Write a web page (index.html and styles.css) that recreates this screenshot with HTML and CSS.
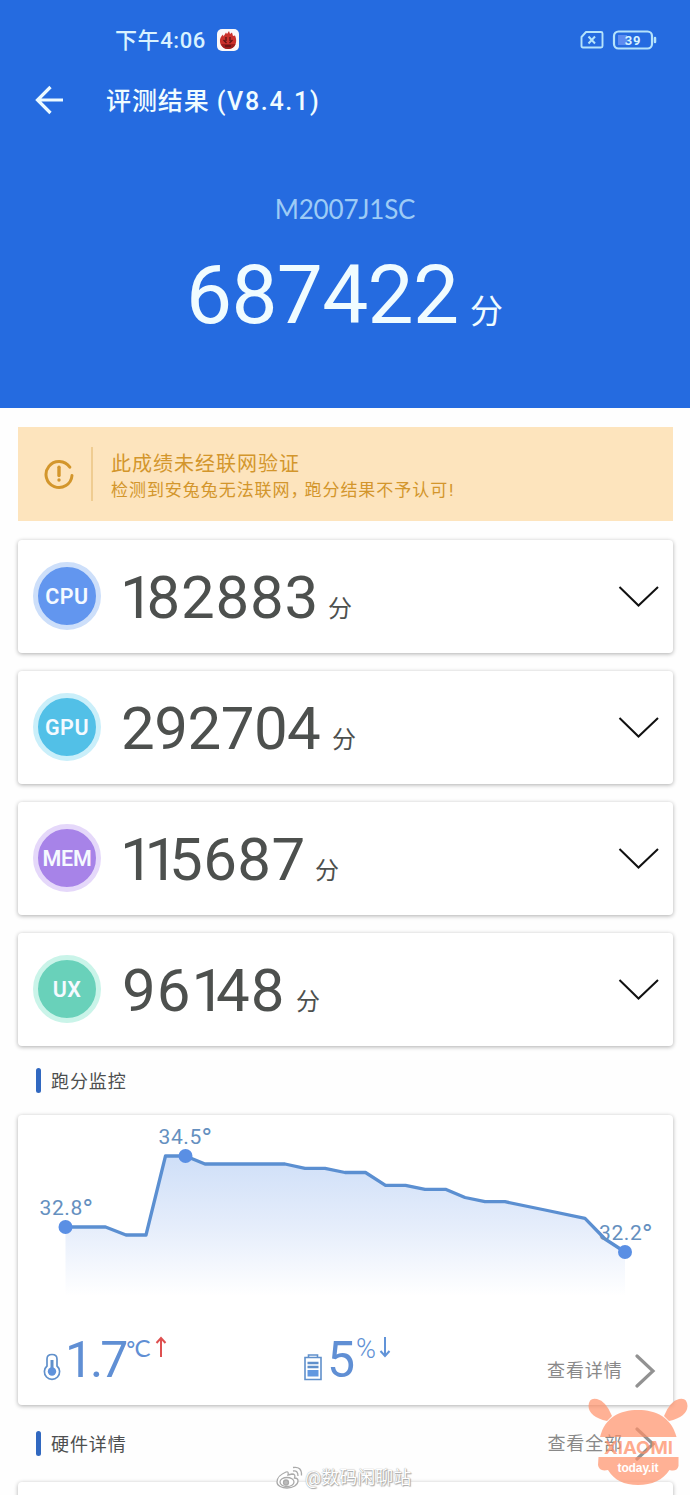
FILE: index.html
```html
<!DOCTYPE html>
<html lang="zh-CN">
<head>
<meta charset="utf-8">
<title>评测结果</title>
<link rel="stylesheet" href="styles.css">
</head>
<body>
<div class="screen">
  <header class="hero">
    <div class="status">
      <span class="clock">下午4:06</span>
      <svg class="app-icon" width="22" height="22" viewBox="0 0 22 22"><rect width="22" height="22" rx="5" fill="#fbf8f8"/><path d="M3 13C2.500 10 4 7 6 5.500L6.500 7.500L9 3.500L10 5L12 2L13 5L15 3.500L16 7L18 6.500C20 11 19.500 16 16 18.500C13 20.500 8 20.500 5.500 18C4 16.500 3.300 15 3 13Z" fill="#c9302b"/><path d="M4 15L18.500 15C17 19 14 20 11 20C7.500 20 5 18 4 15Z" fill="#9c1d1d"/><path d="M6.500 11L9.500 14M15.500 11L12.500 14M9 8V12M13 8V12M8 17H14" stroke="#5e1415" stroke-width="1.300"/></svg>
      <svg class="system" width="78" height="22" viewBox="0 0 78 22" fill="none" stroke="#b5e3fb">
        <path d="M6 3H21Q22.500 3 22.500 4.500V17Q22.500 18.500 21 18.500H3Q1.500 18.500 1.500 17V8Z" stroke-width="1.900" stroke-linejoin="round"/>
        <path d="M8.500 7.500L15 14.500M15 7.500L8.500 14.500" stroke-width="2"/>
        <rect x="34" y="2.500" width="38" height="17" rx="4.500" stroke-width="2.200"/>
        <rect x="38" y="6" width="9" height="10" fill="#5e8cf0" stroke="none"/>
        <path d="M75 9V13" stroke-width="2.500" stroke-linecap="round"/>
        <text class="charge" x="53" y="15.500" stroke="none">39</text>
      </svg>
    </div>
    <div class="titlebar">
      <svg width="30" height="30" viewBox="0 0 30 30" fill="none" stroke="#ecfaff" stroke-width="3.200"><path d="M16.500 2L3.500 15L16.500 28M3.500 15H29"/></svg>
      <h1>评测结果 <span>(V8.4.1)</span></h1>
    </div>
    <div class="model">M2007J1SC</div>
    <div class="total"><span class="total-num">687422</span><span class="total-unit">分</span></div>
  </header>

  <main class="content">
    <section class="notice">
      <svg width="32" height="32" viewBox="0 0 32 32" fill="none" stroke="#d3962c" stroke-width="3" stroke-linecap="round"><path d="M26.800 9.200A13 13 0 1 0 29 17.500"/><path d="M16 9.200V17.500" stroke-width="3.400"/><circle cx="16" cy="22" r="1.700" fill="#d3962c" stroke="none"/></svg>
      <div class="notice-text"><strong>此成绩未经联网验证</strong><span>检测到安兔兔无法联网<i>，</i>跑分结果不予认可<b>!</b></span></div>
    </section>

    <section class="card score"><span class="badge cpu">CPU</span><span class="num cpu-num"><span class="one first">1</span>82883</span><span class="unit">分</span><svg class="chevron" width="42" height="24" viewBox="0 0 42 24"><path d="M1.500 2L20.500 20.500L40 2"/></svg></section>
    <section class="card score"><span class="badge gpu">GPU</span><span class="num gpu-num">292704</span><span class="unit">分</span><svg class="chevron" width="42" height="24" viewBox="0 0 42 24"><path d="M1.500 2L20.500 20.500L40 2"/></svg></section>
    <section class="card score"><span class="badge mem">MEM</span><span class="num mem-num"><span class="one first">1</span><span class="one">1</span>5687</span><span class="unit">分</span><svg class="chevron" width="42" height="24" viewBox="0 0 42 24"><path d="M1.500 2L20.500 20.500L40 2"/></svg></section>
    <section class="card score"><span class="badge ux">UX</span><span class="num ux-num">96<span class="one">1</span>48</span><span class="unit">分</span><svg class="chevron" width="42" height="24" viewBox="0 0 42 24"><path d="M1.500 2L20.500 20.500L40 2"/></svg></section>

    <div class="section-title first-title"><h2>跑分监控</h2></div>
    <section class="card monitor">
      <svg class="chart" width="655" height="200" viewBox="18 1115 655 200">
        <defs><linearGradient id="fade" x1="0" y1="1156" x2="0" y2="1296" gradientUnits="userSpaceOnUse"><stop offset="0" stop-color="#cfdff8"/><stop offset=".5" stop-color="#e5edfb"/><stop offset="1" stop-color="#ffffff"/></linearGradient></defs>
        <path fill="url(#fade)" d="M65.500 1227H105.500L126 1235H146L165.500 1156H185.500L205 1164H285L305 1168.300H325L345 1172.500H365.500L385.500 1185.300H405.500L425 1189.300H445.500L465 1197.500L485 1201.700H505L545 1210L585 1218.300L605 1239L625 1252V1300H65.500Z"/>
        <path class="line" d="M65.500 1227H105.500L126 1235H146L165.500 1156H185.500L205 1164H285L305 1168.300H325L345 1172.500H365.500L385.500 1185.300H405.500L425 1189.300H445.500L465 1197.500L485 1201.700H505L545 1210L585 1218.300L605 1239L625 1252"/>
        <g fill="#5a8fe4"><circle cx="65.500" cy="1227" r="7"/><circle cx="185.500" cy="1156" r="7"/><circle cx="625" cy="1252" r="7"/></g>
        <g class="point"><text x="39.500" y="1215">32.8<tspan class="deg">°</tspan></text><text x="158.500" y="1144">34.5<tspan class="deg">°</tspan></text><text x="599" y="1240">32.2<tspan class="deg">°</tspan></text></g>
      </svg>
      <div class="stats">
        <div class="stat temp">
          <svg width="18" height="28" viewBox="0 0 18 28" fill="none" stroke="#6090cb" stroke-width="1.700"><path d="M4 13V6Q4 1.500 9 1.500T14 6V13A7.600 7.600 0 1 1 4 13Z"/><path d="M9 7V18" stroke-width="3"/><circle cx="9" cy="18.500" r="4.200" fill="#5f92db" stroke="none"/></svg>
          <span class="delta">1.7</span><span class="degree"><i>°</i>C</span>
          <svg class="arrow" width="12" height="22" viewBox="0 0 12 22" fill="none" stroke="#de5050" stroke-width="2"><path d="M6 21V2M1.500 7L6 2L10.500 7"/></svg>
        </div>
        <div class="stat power">
          <svg width="18" height="28" viewBox="0 0 18 28" fill="none" stroke="#6090cb" stroke-width="1.600"><path d="M1 4.500H17V26.500H1ZM4.500 4V2H13.500V4"/><path d="M3.500 10H14.500M3.500 14H14.500" stroke-width="2.300"/><path d="M3.500 17H14.500V23.500H3.500Z" fill="#6298e0" stroke="none"/></svg>
          <span class="delta">5</span><span class="percent">%</span>
          <svg class="arrow" width="12" height="22" viewBox="0 0 12 22" fill="none" stroke="#6193d8" stroke-width="2"><path d="M6 1V20M1.500 15L6 20L10.500 15"/></svg>
        </div>
        <div class="more">查看详情<svg width="22" height="34" viewBox="0 0 22 34"><path d="M2 2L18 17L2 32"/></svg></div>
      </div>
    </section>

    <div class="section-title second-title"><h2>硬件详情</h2><div class="more">查看全部<svg width="22" height="34" viewBox="0 0 22 34"><path d="M2 2L18 17L2 32"/></svg></div></div>
    <section class="card next"></section>
  </main>

  <div class="weibo">
    <svg width="27" height="24" viewBox="0 0 27 24" fill="#fff" stroke="#aaa" stroke-width="1.300"><path d="M10 6C5 8 1 12 1 16C1 20 6 22 11 22C17 22 22 19 22 15Q22 12 18.500 12Q20 8 16 8L12 9Q13 5 10 6Z"/><ellipse cx="11" cy="16" rx="7" ry="4.500"/><circle cx="10" cy="16.500" r="2.500" fill="#bbb"/><path fill="none" d="M17 5Q22 4 22 10M17 1.500Q26 0 25.500 9.500"/></svg>
    <span>@数码闲聊站</span>
  </div>
  <svg class="mascot" width="102" height="90" viewBox="588 1397 102 90">
    <g fill="#ff9068" fill-opacity=".7"><path d="M600 1437C605 1417 620 1410 638 1410S671 1417 676.500 1437Z"/><path d="M607 1421Q589 1417 588.500 1406Q589 1397 597 1399Q606 1401 612 1416Z"/><path d="M669 1421Q687 1417 687.500 1406Q687 1397 679 1399Q670 1401 664 1416Z"/><path d="M598.500 1457H678.500V1466Q677 1472 669.500 1470C663 1480 652 1485 638 1485S614 1480 608 1470Q599 1472 598 1465Z"/></g>
    <text class="brand" x="604" y="1454" textLength="69" lengthAdjust="spacingAndGlyphs">XIAOMI</text><text class="domain" x="617.500" y="1472" textLength="41">today.it</text>
  </svg>
</div>
</body>
</html>
```
FILE: styles.css
```css
* { box-sizing: border-box; }
body { margin: 0; background: #fefefe; font-family: Roboto, "Noto Sans CJK SC", sans-serif; }
.screen { position: relative; width: 690px; height: 1495px; overflow: hidden; }
h1, h2 { margin: 0; font-weight: 400; }
svg { display: block; flex: none; }

.hero { height: 408px; padding-top: 29px; background: #256be0; color: #f0fcff; }
.status { display: flex; height: 22px; padding: 0 32px 0 115px; align-items: center; }
.clock { width: 102px; padding-top: 2px; font-size: 22px; font-weight: 500; letter-spacing: .6px; line-height: 22px; color: #d9f2ff; white-space: nowrap; }
.system { margin-left: auto; }
.charge { fill: #d8f4ff; font: 700 13px Roboto, sans-serif; letter-spacing: .8px; text-anchor: middle; }
.titlebar { display: flex; align-items: center; height: 40px; margin-top: 29px; padding-left: 34px; gap: 42px; }
h1 { padding-top: 3px; font-size: 25px; font-weight: 500; line-height: 37px; letter-spacing: .9px; white-space: nowrap; }
h1 span { letter-spacing: 1.700px; }
.model { margin-top: 69px; height: 40px; text-align: center; font: 400 26px/40px Lato, sans-serif; color: #9dcbf6; letter-spacing: -.15px; }
.total { display: flex; align-items: baseline; height: 90px; margin-top: 21px; padding-left: 186px; }
.total-num { width: 284px; font-size: 82px; line-height: 90px; letter-spacing: -.7px; }
.total-unit { font-size: 33px; line-height: 33px; font-weight: 400; }

.content { padding: 19px 17px 0 18px; }
.notice { display: flex; align-items: center; height: 94px; margin-bottom: 19px; padding-left: 25px; background: #fde4bd; color: #d3962c; }
.notice-text { display: flex; flex-direction: column; height: 54px; margin-left: 16px; padding-left: 18px; border-left: 2px solid #efcc91; }
.notice strong { margin-top: 3px; font-size: 20px; line-height: 28px; font-weight: 400; letter-spacing: 1px; }
.notice span { font-size: 17px; line-height: 24px; letter-spacing: .95px; white-space: nowrap; }
.notice i { display: inline-block; width: 14px; font-style: normal; }
.notice b { font-weight: 400; margin-left: 1px; }

.card { border-radius: 4px; background: #fff; box-shadow: 0 1px 4px rgba(0,0,0,.32); }
.score { display: flex; align-items: center; height: 113px; margin-bottom: 18px; padding: 0 13px 0 15px; color: #4d504e; }
.badge { display: flex; align-items: center; justify-content: center; width: 68px; height: 68px; margin-top: -1px; border: 5px solid; border-radius: 50%; color: #f5faff; font-size: 21.500px; font-weight: 600; letter-spacing: .5px; }
.cpu { background: #6296ef; border-color: #cddffa; }
.gpu { background: #52c0e7; border-color: #caeffa; }
.mem { background: #a783e8; border-color: #e5d8fa; letter-spacing: -.3px; }
.ux { background: #69d1ba; border-color: #caf4e9; }
.num { flex: none; margin: 3px 0 0 20px; font-size: 60px; line-height: 70px; letter-spacing: .8px; white-space: nowrap; }
.cpu-num { width: 195px; }
.gpu-num { width: 199px; letter-spacing: -.5px; }
.mem-num { width: 182px; letter-spacing: .4px; }
.ux-num { width: 163px; padding-left: 1px; letter-spacing: 1px; }
.one { letter-spacing: -9.200px; }
.first { margin-left: -1px; }
.cpu-num .one { letter-spacing: -7.200px; }
.unit { margin: 25px 0 0 12px; font-size: 24px; line-height: 28px; }
.chevron { margin-left: auto; fill: none; stroke: #111; stroke-width: 2; }

.section-title { display: flex; align-items: center; padding-left: 18px; }
.section-title::before { content: ""; width: 5px; height: 25px; border-radius: 3px; background: #3168c0; }
h2 { margin-left: 10px; padding-top: 2px; color: #4d4f4f; font-size: 18px; letter-spacing: .9px; line-height: 28px; }
.first-title { height: 69px; margin-top: -18px; }
.monitor { height: 290px; }
.stats { display: flex; height: 70px; }
.stat { display: flex; align-items: flex-start; color: #608fd4; }
.stat > svg:first-child { margin-top: 38px; }
.temp { width: 261px; padding-left: 25px; }
.power { width: 242px; padding-left: 25px; }
.delta { margin-top: 15px; font-size: 50px; line-height: 60px; }
.temp .delta { width: 61px; margin-left: 4px; letter-spacing: -3px; }
.power .delta { margin-left: 5px; width: 29px; }
.degree { margin-top: 19px; width: 28px; font: 400 24px/28px Lato, sans-serif; white-space: nowrap; }
.degree i { font: 400 21px/28px Inter, sans-serif; letter-spacing: -1px; }
.percent { margin-top: 20px; width: 21px; font-size: 27px; line-height: 28px; font-weight: 300; }
.arrow { margin: 21px 0 0 1px; }
.power .arrow { margin-left: 2px; }
.line { fill: none; stroke: #5b8fd1; stroke-width: 3.300; stroke-linejoin: round; }
.point { font: 400 21px Roboto, sans-serif; fill: #6590bf; letter-spacing: .6px; }
.deg { font-family: Inter, sans-serif; font-size: 22px; letter-spacing: 0; }
.more { display: flex; align-items: center; gap: 12px; color: #898989; font-size: 18px; line-height: 28px; letter-spacing: .9px; white-space: nowrap; }
.more path { fill: none; stroke: #929292; stroke-width: 3.200; stroke-linecap: round; }
.stats .more { height: 34px; margin: 39px 0 0 26px; }
.second-title { height: 77px; }
.second-title .more { margin: 1px 16px 0 auto; }
.next { height: 40px; }

.weibo { position: absolute; left: 276px; top: 1466px; display: flex; gap: 2px; color: #fff; font-size: 18px; line-height: 24px; white-space: nowrap; text-shadow: 0 0 1px #888, 1px 1px 1px #aaa; letter-spacing: 0; }
.mascot { position: absolute; left: 588px; top: 1397px; }
.brand { fill: #ff9068; fill-opacity: .75; font: 700 18px Inter, sans-serif; }
.domain { fill: #fff; font: 700 12px "Liberation Sans", sans-serif; }
```
